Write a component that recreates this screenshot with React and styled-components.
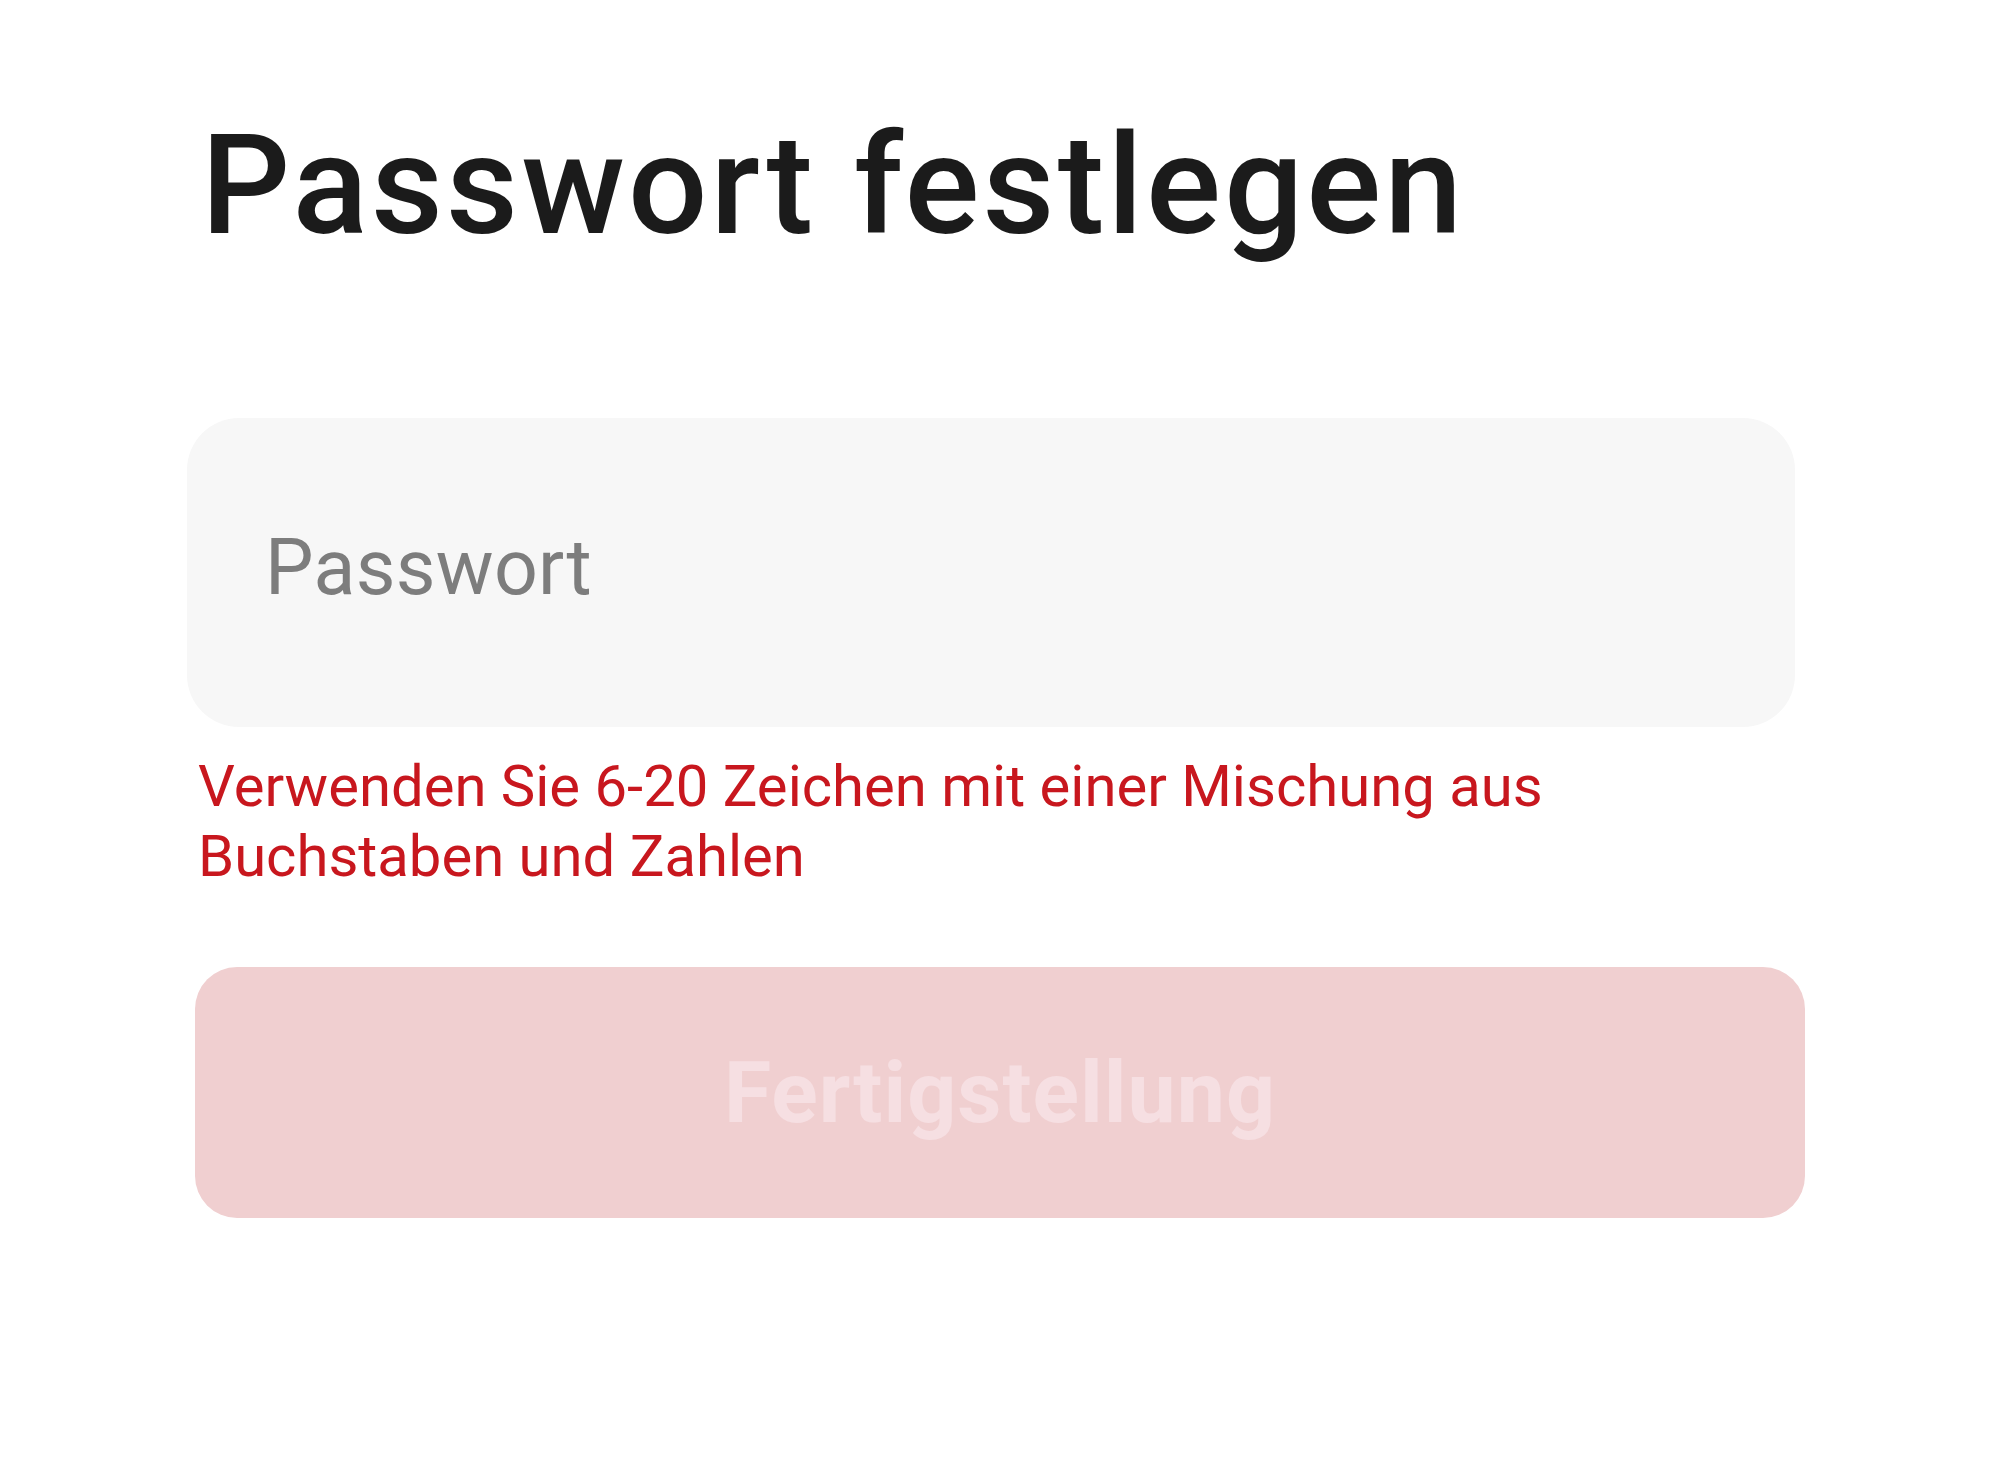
import React from 'react';
import styled, { createGlobalStyle } from 'styled-components';

const GlobalStyle = createGlobalStyle`
  html, body {
    margin: 0;
    padding: 0;
    background: #ffffff;
    font-family: Roboto, 'Noto Sans', sans-serif;
  }
`;

const Page = styled.div`
  width: 2000px;
  min-height: 1467px;
  background: #ffffff;
  display: flex;
  flex-direction: column;
  padding: 115px 0 0 187px;
  box-sizing: border-box;
`;

const Title = styled.h1`
  margin: 0 0 163px 14px;
  font-size: 140px;
  line-height: 140px;
  font-weight: 500;
  letter-spacing: 3px;
  color: #1b1b1b;
`;

const Field = styled.div`
  width: 1608px;
  height: 309px;
  border-radius: 52px;
  background: #f7f7f7;
  display: flex;
  align-items: center;
  padding: 0 0 10px 78px;
  box-sizing: border-box;
`;

const Placeholder = styled.span`
  font-size: 77px;
  letter-spacing: 0.3px;
  color: #7d7d7d;
`;

const Hint = styled.p`
  margin: 24px 0 0 11px;
  font-size: 58px;
  line-height: 70px;
  color: #c8171e;
  max-width: 1450px;
`;

const Submit = styled.button`
  margin: 76px 0 0 8px;
  width: 1610px;
  height: 251px;
  border: none;
  border-radius: 42px;
  background: #f0cfd0;
  color: #f6dfe2;
  font-family: Roboto, 'Noto Sans', sans-serif;
  font-size: 86px;
  font-weight: 700;
  letter-spacing: 1px;
  display: flex;
  align-items: center;
  justify-content: center;
  padding: 0;
`;

const App = () => {
  return (
    <>
      <GlobalStyle />
      <Page>
        <Title>Passwort festlegen</Title>
        <Field>
          <Placeholder>Passwort</Placeholder>
        </Field>
        <Hint>
          Verwenden Sie 6-20 Zeichen mit einer Mischung aus Buchstaben und
          Zahlen
        </Hint>
        <Submit disabled>Fertigstellung</Submit>
      </Page>
    </>
  );
};

export default App;
